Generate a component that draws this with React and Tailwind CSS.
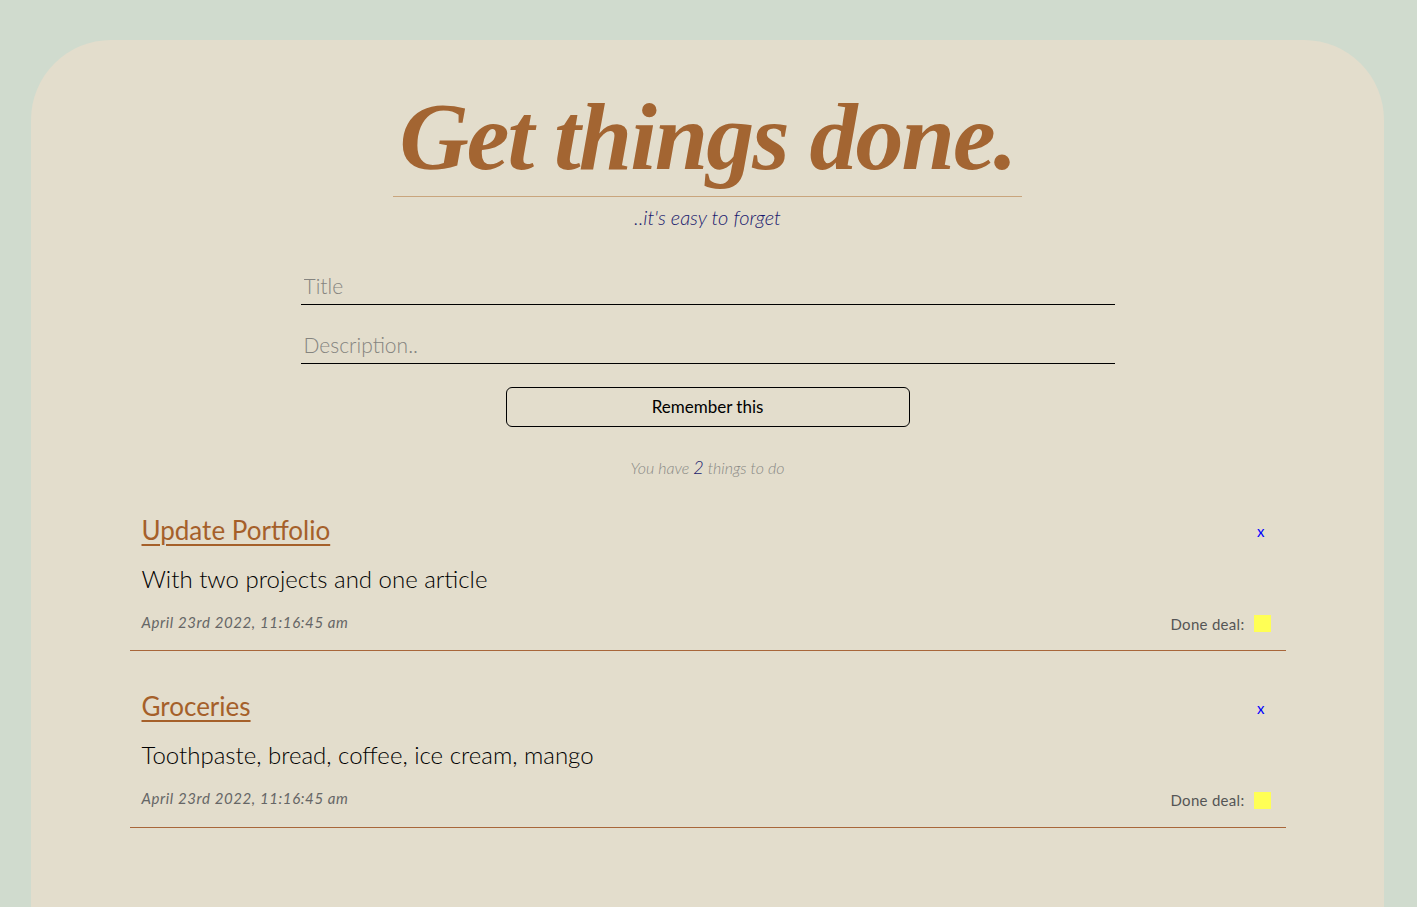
export default function App() {
  const todos = [
    { title: "Update Portfolio", desc: "With two projects and one article", date: "April 23rd 2022, 11:16:45 am" },
    { title: "Groceries", desc: "Toothpaste, bread, coffee, ice cream, mango", date: "April 23rd 2022, 11:16:45 am" },
  ];
  return (
    <div className="min-h-[907px] bg-[#d0dbce] pt-[40px] pl-[31px] pr-[33px] font-['Lato',sans-serif]">
      <div className="min-h-[867px] rounded-t-[80px] bg-[#e3ddcc] flex flex-col items-center">
        <div className="mt-[44px] flex flex-col items-center">
          <h1 className="border-b border-[#c9a57d] px-[6px] pb-[6px] font-['Liberation_Serif',serif] text-[96px] font-bold italic leading-[1.1] tracking-[-2px] text-[#a36532]">
            Get things done.
          </h1>
          <p className="mt-[8px] text-[20px] font-light italic leading-[24px] text-[#1a1a6e]">..it's easy to forget</p>
        </div>
        <div className="mt-[34px] w-[814px] flex flex-col">
          <input
            placeholder="Title"
            className="h-[42px] border-b border-black bg-transparent px-[3px] pt-[4px] text-[21px] font-light text-black outline-none placeholder:text-[#85847f]"
          />
          <input
            placeholder="Description.."
            className="mt-[17px] h-[42px] border-b border-black bg-transparent px-[3px] pt-[4px] text-[21px] font-light text-black outline-none placeholder:text-[#85847f]"
          />
        </div>
        <button className="mt-[23px] h-[40px] w-[404px] rounded-[6px] border border-black text-[17px] text-black">
          Remember this
        </button>
        <p className="mt-[27px] text-[16px] font-light italic text-[#8a8a86]">
          You have <span className="text-[18px] text-[#1a1a6e]">2</span> things to do
        </p>
        <ul className="mt-[21px] w-[1156px] flex flex-col">
          {todos.map((t, i) => (
            <li key={i} className="border-b border-[#a8663a] pl-[12px] pr-[15px] pt-[10px] pb-[15px] mb-[27px]">
              <div className="flex items-center justify-between">
                <a href="#" className="text-[26px] leading-[36px] text-[#a5602a] underline underline-offset-[4px] decoration-[1.5px]">
                  {t.title}
                </a>
                <span className="mr-[6px] mt-[4px] text-[15px] text-[#0000ff]">x</span>
              </div>
              <p className="mt-[16px] text-[24px] font-light leading-[30px] text-black">{t.desc}</p>
              <div className="mt-[15px] flex items-center justify-between">
                <span className="text-[15px] italic tracking-[0.6px] text-[#666]">{t.date}</span>
                <span className="mt-[4px] flex items-center gap-[9px] text-[15px] tracking-[0.3px] text-[#555]">
                  Done deal:
                  <span className="inline-block h-[17px] w-[17px] bg-[#ffff55]"></span>
                </span>
              </div>
            </li>
          ))}
        </ul>
      </div>
    </div>
  );
}
